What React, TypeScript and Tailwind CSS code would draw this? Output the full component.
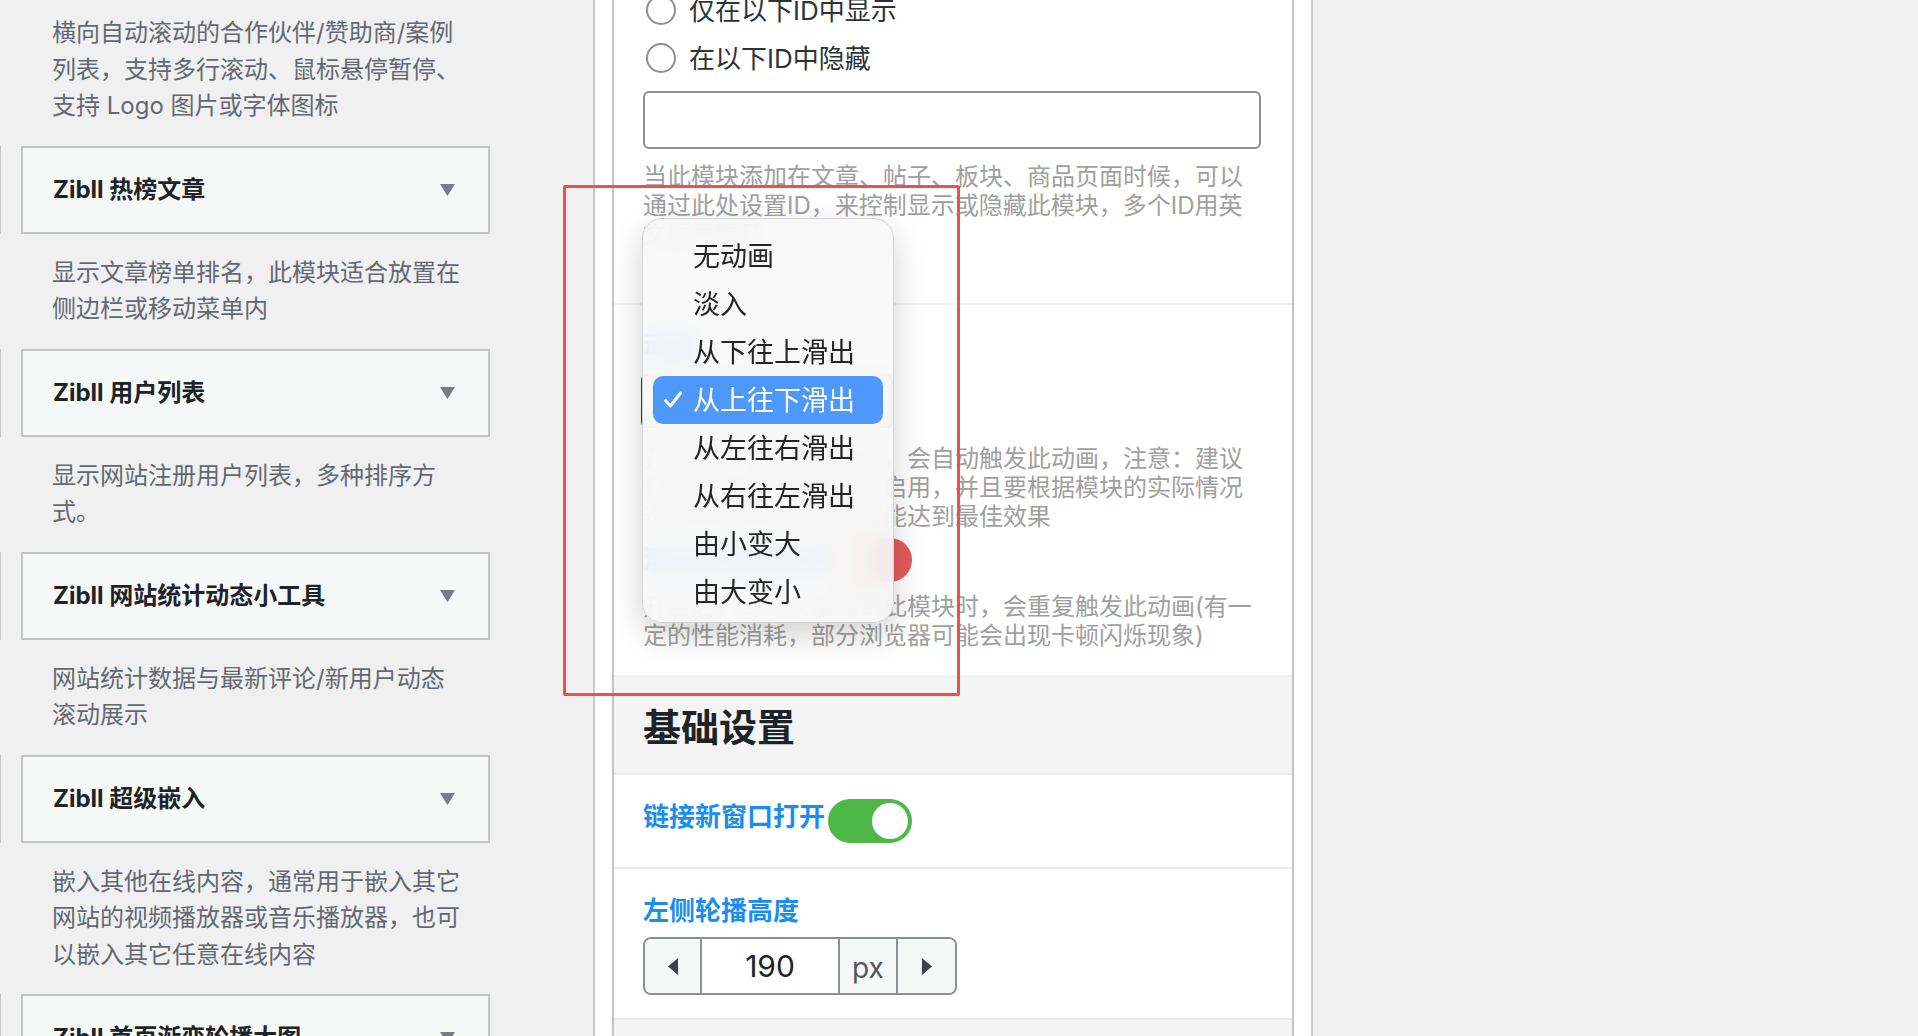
import React from "react";

const widgets = [
  { title: "Zibll 热榜文章", desc: "显示文章榜单排名，此模块适合放置在侧边栏或移动菜单内" },
  { title: "Zibll 用户列表", desc: "显示网站注册用户列表，多种排序方式。" },
  { title: "Zibll 网站统计动态小工具", desc: "网站统计数据与最新评论/新用户动态滚动展示" },
  {
    title: "Zibll 超级嵌入",
    desc: "嵌入其他在线内容，通常用于嵌入其它网站的视频播放器或音乐播放器，也可以嵌入其它任意在线内容",
  },
  { title: "Zibll 首页渐变轮播大图", desc: "" },
];

const animations = [
  "无动画",
  "淡入",
  "从下往上滑出",
  "从上往下滑出",
  "从左往右滑出",
  "从右往左滑出",
  "由小变大",
  "由大变小",
];

function WidgetDesc({ text, first }: { text: string; first?: boolean }) {
  return (
    <p
      className={`w-[464px] pl-[52px] pb-[21px] text-[24px] leading-[36.5px] text-[#646970] ${
        first ? "pt-[15px]" : "pt-[21px]"
      }`}
    >
      {text}
    </p>
  );
}

function WidgetCard({ title }: { title: string }) {
  return (
    <div className="flex h-[88px]">
      <div className="w-[1px] bg-[#c3c4c7]" />
      <div className="ml-[20px] flex w-[469px] items-center justify-between border-2 border-[#c3c4c7] bg-[#f6f7f7] pl-[30px] pr-[33px]">
        <span className="text-[24px] font-bold text-[#1d2327]">{title}</span>
        <svg width="15" height="12" viewBox="0 0 15 12">
          <polygon points="0,0 15,0 7.5,12" fill="#787c82" />
        </svg>
      </div>
    </div>
  );
}

function Radio({ label, className = "" }: { label: string; className?: string }) {
  return (
    <div className={`flex h-[48px] items-center gap-[13px] pl-[3px] ${className}`}>
      <span className="h-[30px] w-[30px] rounded-full border-2 border-[#8c8f94] bg-white" />
      <span className="text-[26px] text-[#2c3338]">{label}</span>
    </div>
  );
}

function Toggle({ on, color }: { on: boolean; color: string }) {
  return (
    <div
      className={`flex h-[44px] w-[84px] shrink-0 items-center rounded-full p-[4px] ${color} ${
        on ? "justify-end" : "justify-start"
      }`}
    >
      <span className="h-[36px] w-[36px] rounded-full bg-white" />
    </div>
  );
}

function Label({ children, className = "" }: { children: React.ReactNode; className?: string }) {
  return <div className={`text-[26px] font-bold leading-[36px] text-[#1b8df2] ${className}`}>{children}</div>;
}

function Help({ children, className = "" }: { children: React.ReactNode; className?: string }) {
  return <p className={`text-[24px] leading-[29px] text-[#a0a0a0] ${className}`}>{children}</p>;
}

export default function App() {
  return (
    <div className="relative flex h-[1036px] w-[1918px] overflow-hidden bg-[#f0f0f1] font-['Inter','Noto_Sans_CJK_SC',sans-serif]">
      {/* widget list */}
      <aside className="w-[593px] shrink-0">
        <WidgetDesc first text="横向自动滚动的合作伙伴/赞助商/案例列表，支持多行滚动、鼠标悬停暂停、支持 Logo 图片或字体图标" />
        {widgets.map((w) => (
          <div key={w.title}>
            <WidgetCard title={w.title} />
            {w.desc && <WidgetDesc text={w.desc} />}
          </div>
        ))}
      </aside>

      {/* settings panel */}
      <div className="h-full w-[720px] shrink-0 border-x-2 border-[#c9c9cc] bg-white px-[17px]">
        <div className="flex h-full flex-col border-x-2 border-[#c3c4c7] bg-white">
          <section className="border-b-2 border-[#f0f0f0] pb-[54px] pl-[29px] pr-[31px]">
            <Radio label="仅在以下ID中显示" className="-mt-[14px]" />
            <Radio label="在以下ID中隐藏" />
            <div className="mt-[9px] h-[58px] w-full rounded-[6px] border-2 border-[#8c8f94]" />
            <Help className="mt-[13px]">
              当此模块添加在文章、帖子、板块、商品页面时候，可以通过此处设置ID，来控制显示或隐藏此模块，多个ID用英文逗号隔开
            </Help>
          </section>

          <section className="border-b-2 border-[#f0f0f0] pb-[25px] pl-[29px] pr-[31px] pt-[23px]">
            <Label>动画</Label>
            <div className="-ml-[2px] mt-[10px] h-[54px] w-[252px] rounded-[6px] border-2 border-[#1f3f66] bg-white" />
            <Help className="mt-[16px]">
              开启后，当模块显示时，会自动触发此动画，注意：建议只在首屏以下的模块中启用，并且要根据模块的实际情况选择合适的动画类型才能达到最佳效果
            </Help>
            <div className="mt-[7px] flex items-center gap-[3px]">
              <Label>滚动时重复触发</Label>
              <Toggle on={false} color="bg-[#e45b5b]" />
            </div>
            <Help className="mt-[10px]">
              开启后，每一次滚动到此模块时，会重复触发此动画(有一定的性能消耗，部分浏览器可能会出现卡顿闪烁现象)
            </Help>
          </section>

          <div className="flex h-[98px] items-center border-b-2 border-[#ebebeb] bg-[#f4f4f4] pl-[29px] pt-[4px]">
            <h2 className="text-[38px] font-bold leading-none text-[#1d2327]">基础设置</h2>
          </div>

          <div className="flex items-center gap-[3px] border-b-2 border-[#ececec] py-[24px] pl-[29px]">
            <Label className="mb-[8px]">链接新窗口打开</Label>
            <Toggle on color="bg-[#4db847]" />
          </div>

          <div className="border-b-2 border-[#ececec] pb-[23px] pl-[29px] pt-[24px]">
            <Label>左侧轮播高度</Label>
            <div className="mt-[8px] flex h-[58px] w-[314px] overflow-hidden rounded-[8px] border-2 border-[#8c8f94]">
              <div className="flex w-[57px] items-center justify-center border-r-2 border-[#8c8f94] bg-[#f6f7f7]">
                <svg width="10" height="17" viewBox="0 0 10 17">
                  <polygon points="10,0 10,17 0,8.5" fill="#3c434a" />
                </svg>
              </div>
              <div className="flex w-[138px] items-center justify-center border-r-2 border-[#8c8f94] bg-white text-[30px] text-[#1d2327]">
                190
              </div>
              <div className="flex w-[58px] items-center justify-center border-r-2 border-[#8c8f94] bg-[#f6f7f7] pt-[4px] text-[28px] text-[#50575e]">
                px
              </div>
              <div className="flex flex-1 items-center justify-center bg-[#f6f7f7]">
                <svg width="10" height="17" viewBox="0 0 10 17">
                  <polygon points="0,0 0,17 10,8.5" fill="#3c434a" />
                </svg>
              </div>
            </div>
          </div>

          <div className="flex-1 bg-[#f4f4f4]" />
        </div>
      </div>

      <div className="flex-1" />

      {/* native select popup */}
      <div className="absolute left-[642px] top-[218px] w-[252px] rounded-[20px] border border-[#d4d4d4] bg-[#f7f7f7]/90 pb-[6px] pt-[13px] shadow-[0_12px_32px_rgba(0,0,0,0.18)] backdrop-blur-md">
        {animations.map((a, i) => {
          const selected = i === 3;
          return (
            <div
              key={a}
              className={`mx-[10px] flex h-[48px] items-center rounded-[10px] pl-[10px] text-[27px] leading-none ${
                selected ? "bg-[#4f98fb] text-white" : "text-[#242424]"
              }`}
            >
              <span className="flex w-[30px] items-center">
                {selected && (
                  <svg width="20" height="20" viewBox="0 0 20 20">
                    <path d="M2.5 10.5 L7.5 16 L17.5 3" fill="none" stroke="white" strokeWidth="3" strokeLinecap="round" strokeLinejoin="round" />
                  </svg>
                )}
              </span>
              {a}
            </div>
          );
        })}
      </div>

      {/* annotation frame */}
      <div className="pointer-events-none absolute left-[563px] top-[185px] h-[511px] w-[397px] rounded-[2px] border-[3px] border-[#f24e4e]" />
    </div>
  );
}
